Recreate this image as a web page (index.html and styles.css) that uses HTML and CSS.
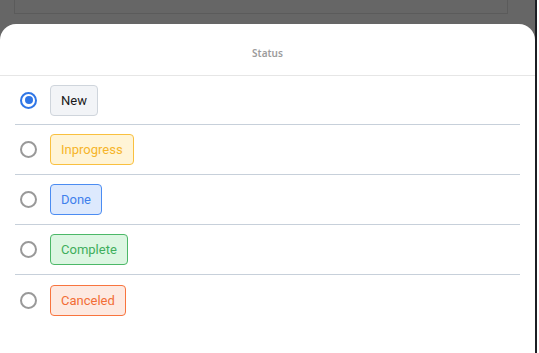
FILE: index.html
```html
<!DOCTYPE html>
<html lang="en">
<head>
    <meta charset="UTF-8">
    <meta name="viewport" content="width=device-width, initial-scale=1.0">
    <title>Status</title>
    <link rel="stylesheet" href="styles.css">
</head>
<body>
    <div class="screen">
        <div class="backdrop-card"></div>
        <div class="sheet">
            <div class="sheet-title">Status</div>
            <ul class="status-list">
                <li class="status-row">
                    <span class="radio checked"></span>
                    <span class="tag tag-new">New</span>
                </li>
                <li class="status-row">
                    <span class="radio"></span>
                    <span class="tag tag-progress">Inprogress</span>
                </li>
                <li class="status-row">
                    <span class="radio"></span>
                    <span class="tag tag-done">Done</span>
                </li>
                <li class="status-row">
                    <span class="radio"></span>
                    <span class="tag tag-complete">Complete</span>
                </li>
                <li class="status-row">
                    <span class="radio"></span>
                    <span class="tag tag-canceled">Canceled</span>
                </li>
            </ul>
        </div>
    </div>
    <div class="edge"></div>
</body>
</html>
```

FILE: styles.css
```css
body, html {
    margin: 0;
    padding: 0;
    height: 353px;
    overflow: hidden;
    font-family: Roboto, "Noto Sans", Arial, sans-serif;
}
body {
    display: flex;
    background: #ffffff;
}
.screen {
    width: 535px;
    height: 353px;
    background: #666666;
    display: flex;
    flex-direction: column;
}
.backdrop-card {
    height: 24px;
    margin: -10px 27px 10px 14px;
    border: 1px solid #5b5b5b;
    box-sizing: border-box;
}
.edge {
    width: 2px;
    height: 353px;
    background: #1c1f24;
}
.sheet {
    flex: 1;
    background: white;
    border-radius: 16px 16px 0 0;
}
.sheet-title {
    height: 52px;
    line-height: 58px;
    text-align: center;
    font-family: "Noto Sans", Arial, sans-serif;
    font-size: 10px;
    font-weight: 600;
    color: #9c9c9c;
    border-bottom: 1px solid #e6e6e6;
    box-sizing: border-box;
}
.status-list {
    list-style: none;
    margin: 0;
    padding: 0 15px;
}
.status-row {
    height: 50px;
    display: flex;
    align-items: center;
    gap: 13px;
    padding-left: 5px;
    border-bottom: 1px solid #c7d0da;
    box-sizing: border-box;
}
.status-row:first-child {
    height: 49px;
}
.status-row:last-child {
    border-bottom: none;
}
.radio {
    width: 17px;
    height: 17px;
    border: 2px solid #999999;
    border-radius: 50%;
    box-sizing: border-box;
    position: relative;
}
.radio.checked {
    border-color: #2f76e6;
}
.radio.checked::after {
    content: "";
    position: absolute;
    left: 2.5px;
    top: 2.5px;
    width: 8px;
    height: 8px;
    border-radius: 50%;
    background: #2f76e6;
}
.tag {
    height: 31px;
    line-height: 29px;
    padding: 0 10px;
    border: 1px solid;
    border-radius: 4px;
    box-sizing: border-box;
    font-size: 13px;
}
.tag-new {
    background: #f2f4f7;
    border-color: #cfd5dc;
    color: #1a1a1a;
}
.tag-progress {
    background: #fff4d6;
    border-color: #f9c03f;
    color: #f6b52a;
}
.tag-done {
    background: #dde9fd;
    border-color: #4b8cf2;
    color: #3f80ec;
}
.tag-complete {
    background: #dcf6e2;
    border-color: #4cb868;
    color: #3fae5c;
}
.tag-canceled {
    background: #fde9e1;
    border-color: #f8743e;
    color: #f26d36;
}
```
